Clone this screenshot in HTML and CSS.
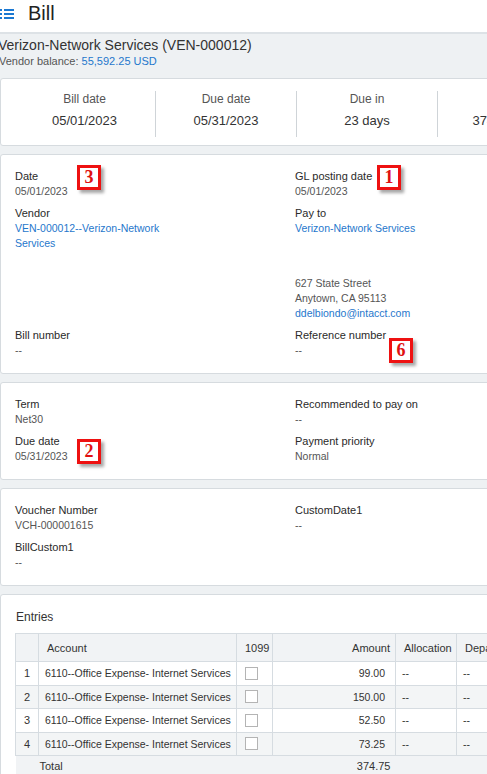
FILE: index.html
```html
<!DOCTYPE html>
<html>
<head>
<meta charset="utf-8">
<link rel="stylesheet" href="styles.css">
</head>
<body>
<div class="page">
  <header class="topbar">
    <svg class="menu-icon" width="14" height="12" viewBox="0 0 14 12">
      <rect x="0" y="1" width="2" height="2" fill="#1a78d2"/>
      <rect x="4" y="1" width="10" height="2" fill="#1a78d2"/>
      <rect x="0" y="5" width="2" height="2" fill="#1a78d2"/>
      <rect x="4" y="5" width="10" height="2" fill="#1a78d2"/>
      <rect x="0" y="9" width="2" height="2" fill="#1a78d2"/>
      <rect x="4" y="9" width="10" height="2" fill="#1a78d2"/>
    </svg>
    <h1 class="title">Bill</h1>
  </header>

  <section class="vendor-head">
    <div class="vendor-name">Verizon-Network Services (VEN-000012)</div>
    <div class="vendor-balance">Vendor balance: <a class="link">55,592.25 USD</a></div>
  </section>

  <main class="content">
    <div class="card summary">
      <div class="stat">
        <div class="stat-label">Bill date</div>
        <div class="stat-value">05/01/2023</div>
      </div>
      <div class="stat">
        <div class="stat-label">Due date</div>
        <div class="stat-value">05/31/2023</div>
      </div>
      <div class="stat">
        <div class="stat-label">Due in</div>
        <div class="stat-value">23 days</div>
      </div>
      <div class="stat">
        <div class="stat-label">Amount</div>
        <div class="stat-value">374.75 USD</div>
      </div>
    </div>

    <div class="card fields">
      <div class="field">
        <div class="label">Date</div>
        <div class="value">05/01/2023</div>
      </div>
      <div class="field">
        <div class="label">GL posting date</div>
        <div class="value">05/01/2023</div>
      </div>
      <div class="field">
        <div class="label">Vendor</div>
        <div class="value link narrow">VEN-000012--Verizon-Network Services</div>
      </div>
      <div class="field">
        <div class="label">Pay to</div>
        <div class="value link">Verizon-Network Services</div>
        <div class="addr-gap"></div>
        <div class="value">627 State Street</div>
        <div class="value">Anytown, CA 95113</div>
        <div class="value link">ddelbiondo@intacct.com</div>
      </div>
      <div class="field">
        <div class="label">Bill number</div>
        <div class="value">--</div>
      </div>
      <div class="field">
        <div class="label">Reference number</div>
        <div class="value">--</div>
      </div>
      <span class="badge b3">3</span>
      <span class="badge b1">1</span>
      <span class="badge b6">6</span>
    </div>

    <div class="card fields">
      <div class="field">
        <div class="label">Term</div>
        <div class="value">Net30</div>
      </div>
      <div class="field">
        <div class="label">Recommended to pay on</div>
        <div class="value">--</div>
      </div>
      <div class="field">
        <div class="label">Due date</div>
        <div class="value">05/31/2023</div>
      </div>
      <div class="field">
        <div class="label">Payment priority</div>
        <div class="value">Normal</div>
      </div>
      <span class="badge b2">2</span>
    </div>

    <div class="card fields">
      <div class="field">
        <div class="label">Voucher Number</div>
        <div class="value">VCH-000001615</div>
      </div>
      <div class="field">
        <div class="label">CustomDate1</div>
        <div class="value">--</div>
      </div>
      <div class="field">
        <div class="label">BillCustom1</div>
        <div class="value">--</div>
      </div>
    </div>

    <div class="card entries">
      <div class="entries-title">Entries</div>
      <table class="grid">
        <colgroup>
          <col class="c-num"><col class="c-acct"><col class="c-1099"><col class="c-amt"><col class="c-alloc"><col class="c-dept"><col class="c-more">
        </colgroup>
        <thead>
          <tr>
            <th></th>
            <th class="left">Account</th>
            <th class="left">1099</th>
            <th class="right">Amount</th>
            <th class="left">Allocation</th>
            <th class="left">Department</th>
            <th class="left">Location</th>
          </tr>
        </thead>
        <tbody>
          <tr>
            <td class="num">1</td>
            <td>6110--Office Expense- Internet Services</td>
            <td class="chk"><span class="box"></span></td>
            <td class="amt">99.00</td>
            <td>--</td>
            <td>--</td>
            <td>--</td>
          </tr>
          <tr class="alt">
            <td class="num">2</td>
            <td>6110--Office Expense- Internet Services</td>
            <td class="chk"><span class="box"></span></td>
            <td class="amt">150.00</td>
            <td>--</td>
            <td>--</td>
            <td>--</td>
          </tr>
          <tr>
            <td class="num">3</td>
            <td>6110--Office Expense- Internet Services</td>
            <td class="chk"><span class="box"></span></td>
            <td class="amt">52.50</td>
            <td>--</td>
            <td>--</td>
            <td>--</td>
          </tr>
          <tr class="alt">
            <td class="num">4</td>
            <td>6110--Office Expense- Internet Services</td>
            <td class="chk"><span class="box"></span></td>
            <td class="amt">73.25</td>
            <td>--</td>
            <td>--</td>
            <td>--</td>
          </tr>
        </tbody>
        <tfoot>
          <tr>
            <td></td>
            <td class="total-label">Total</td>
            <td></td>
            <td class="total-amt">374.75</td>
            <td></td>
            <td></td>
            <td></td>
          </tr>
        </tfoot>
      </table>
    </div>
  </main>
</div>
</body>
</html>
```

FILE: styles.css
```css
html, body {
  margin: 0;
  padding: 0;
  background: #eef1f3;
  overflow: hidden;
}

body {
  font-family: "Liberation Sans", Arial, sans-serif;
  color: #333;
}

.page {
  width: 620px;
}

.topbar {
  background: #fff;
  height: 34px;
  display: flex;
  align-items: flex-start;
  gap: 14px;
  border-bottom: 2px solid #dde2e6;
  box-sizing: border-box;
}

.menu-icon {
  margin-top: 8px;
  flex: none;
}

.title {
  margin: 0;
  font-size: 20px;
  font-weight: normal;
  line-height: 27px;
  color: #222;
}

.vendor-head {
  padding: 2px 0 10px 0;
  margin-left: -2px;
}

.vendor-name {
  font-size: 14px;
  line-height: 18px;
  color: #333;
}

.vendor-balance {
  font-size: 11px;
  line-height: 14px;
  color: #555;
  margin-left: 1px;
}

.link {
  color: #1f77cc;
  text-decoration: none;
}

.content {
  display: flex;
  flex-direction: column;
  gap: 8px;
}

.card {
  background: #fff;
  border: 1px solid #d6dbdf;
  border-radius: 3px;
  position: relative;
}

.summary {
  display: flex;
  padding: 12px 0 8px 13px;
}

.stat {
  width: 141px;
  flex: none;
  text-align: center;
  padding-bottom: 8px;
  box-sizing: border-box;
}

.stat + .stat {
  border-left: 1px solid #cfd4d8;
}

.stat-label {
  font-size: 12px;
  line-height: 16px;
  color: #555;
}

.stat-value {
  margin-top: 6px;
  font-size: 13px;
  line-height: 16px;
  color: #333;
}

.fields {
  display: grid;
  grid-template-columns: 280px 280px;
  row-gap: 7px;
  padding: 14px 14px 15px 14px;
}

.field .label {
  font-size: 11px;
  line-height: 15px;
  color: #2a2a2a;
}

.field .value {
  font-size: 10.5px;
  line-height: 15px;
  color: #555;
}

.field .value.link {
  color: #1f77cc;
}

.value.narrow {
  max-width: 150px;
}

.addr-gap {
  height: 40px;
}

.badge {
  position: absolute;
  width: 18px;
  height: 19px;
  border: 3px solid #ee1111;
  background: #fff;
  color: #e01010;
  font-family: "Liberation Serif", "Times New Roman", serif;
  font-weight: bold;
  font-size: 18px;
  line-height: 19px;
  text-align: center;
  box-shadow: 3px 3px 3px rgba(0, 0, 0, 0.35);
}

.b3 { left: 76px; top: 10px; }
.b1 { left: 376px; top: 10px; }
.b6 { left: 388px; top: 183px; }
.b2 { left: 76px; top: 56px; }

.entries {
  padding: 14px 0 20px 14px;
}

.entries-title {
  font-size: 12px;
  line-height: 16px;
  color: #333;
  margin-bottom: 8px;
  margin-left: 1px;
}

.grid {
  border-collapse: collapse;
  table-layout: fixed;
  width: 560px;
  font-size: 10.5px;
  color: #333;
}

.c-num { width: 23px; }
.c-acct { width: 198px; }
.c-1099 { width: 36px; }
.c-amt { width: 123px; }
.c-alloc { width: 61px; }
.c-dept { width: 70px; }
.c-more { width: 49px; }

.grid th {
  background: #f1f3f5;
  border: 1px solid #d6dce1;
  height: 27px;
  font-size: 11px;
  font-weight: normal;
  color: #333;
  padding: 0 8px;
  white-space: nowrap;
  overflow: hidden;
}

.grid th.left { text-align: left; }
.grid th.right { text-align: right; padding-right: 5px; }

.grid tbody td {
  border: 1px solid #d6dce1;
  height: 22.5px;
  padding: 0 6px;
  white-space: nowrap;
  overflow: hidden;
}

.grid tbody tr.alt td {
  background: #f3f5f6;
}

.grid td.num {
  text-align: center;
  padding: 0;
  font-size: 11px;
}

.grid td.amt {
  text-align: right;
  padding-right: 10px;
}

.grid td.chk {
  padding: 0 0 0 8px;
}

.box {
  display: block;
  width: 11px;
  height: 11px;
  border: 1px solid #b4b4b4;
  background: #fff;
}

.grid tfoot td {
  background: #f1f3f5;
  height: 20px;
  padding: 0;
}

.grid td.total-label {
  padding-left: 1px;
  font-size: 11px;
}

.grid td.total-amt {
  text-align: right;
  padding-right: 5px;
  font-size: 11px;
}
```
